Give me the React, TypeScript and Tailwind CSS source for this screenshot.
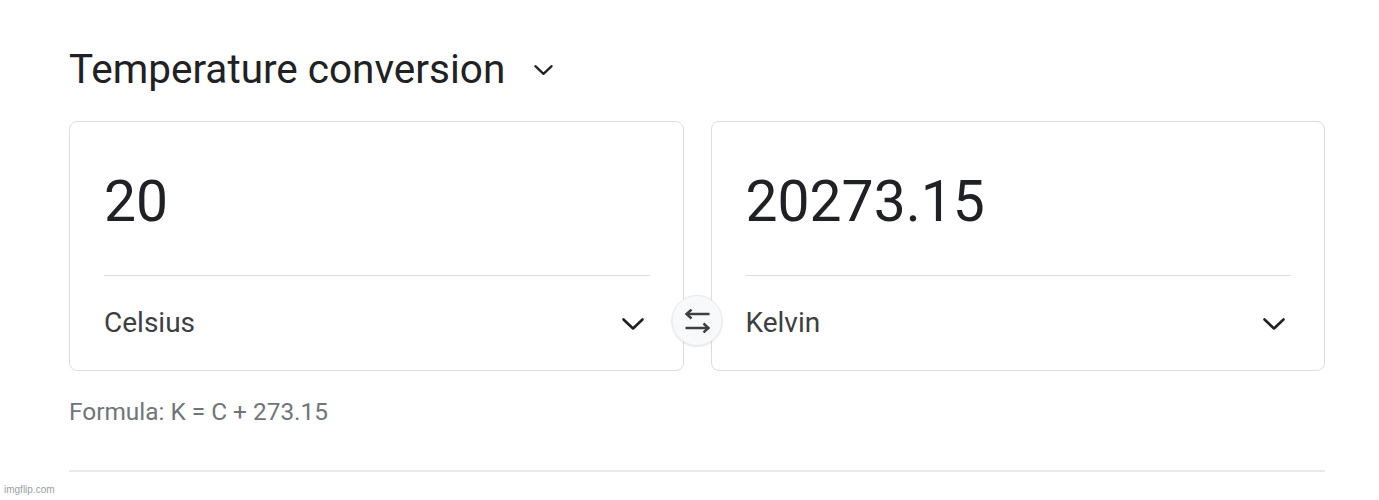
function Chevron({ w = 24, h = 14 }: { w?: number; h?: number }) {
  return (
    <svg width={w} height={h} viewBox="0 0 24 14" fill="none" stroke="#202124" strokeWidth="2.6" strokeLinecap="round" strokeLinejoin="round">
      <path d="M2.5 2.5L12 11.5L21.5 2.5" />
    </svg>
  );
}

function SwapIcon() {
  return (
    <svg width="28" height="24" viewBox="0 0 28 24" fill="none" stroke="#3c4043" strokeWidth="2.4" strokeLinejoin="miter">
      <path d="M3 5h23" />
      <path d="M8 0.5L3 5l5 4.5" />
      <path d="M2 19h23" />
      <path d="M20 14.5l5 4.5-5 4.5" />
    </svg>
  );
}

function UnitBox({ value, unit }: { value: string; unit: string }) {
  return (
    <div className="rounded-lg border border-[#dadce0] pl-[34px] pr-[33px] h-[250px] flex flex-col">
      <div className="pt-[51px] text-[57px] leading-none text-[#202124] h-[154px]">{value}</div>
      <div className="border-t border-[#dadce0]" />
      <div className="flex items-center justify-between h-[94px]">
        <span className="text-[28px] leading-none text-[#3c4043]">{unit}</span>
        <div className="mr-[5px] mt-[2px]">
          <Chevron />
        </div>
      </div>
    </div>
  );
}

export default function App() {
  return (
    <main className="relative w-[1379px] h-[500px] bg-white font-['Roboto',sans-serif] overflow-hidden">
      <div className="pl-[69px] pr-[54px] pt-[44px]">
        <div className="flex items-center gap-[28px] h-[50px]">
          <h1 className="text-[40.5px] leading-none text-[#202124]">Temperature conversion</h1>
          <div className="mt-[1px]">
            <Chevron w={21} h={12} />
          </div>
        </div>
        <div className="relative mt-[27px] grid grid-cols-2 gap-[27px]">
          <UnitBox value="20" unit="Celsius" />
          <UnitBox value="20273.15" unit="Kelvin" />
          <div className="absolute left-1/2 top-[174px] -translate-x-1/2 w-[51px] h-[51px] rounded-full bg-[#f8f9fa] border border-[#e8eaed] shadow-[0_1px_2px_rgba(60,64,67,0.12)] flex items-center justify-center">
            <SwapIcon />
          </div>
        </div>
        <p className="mt-[29px] text-[24.4px] leading-none text-[#70757a]">Formula: K = C + 273.15</p>
        <div className="mt-[46px] border-t-2 border-[#e8eaed]" />
      </div>
      <span className="absolute left-[4px] bottom-[3px] text-[10px] text-[#9aa0a6] font-['Liberation_Sans',sans-serif]">imgflip.com</span>
    </main>
  );
}
